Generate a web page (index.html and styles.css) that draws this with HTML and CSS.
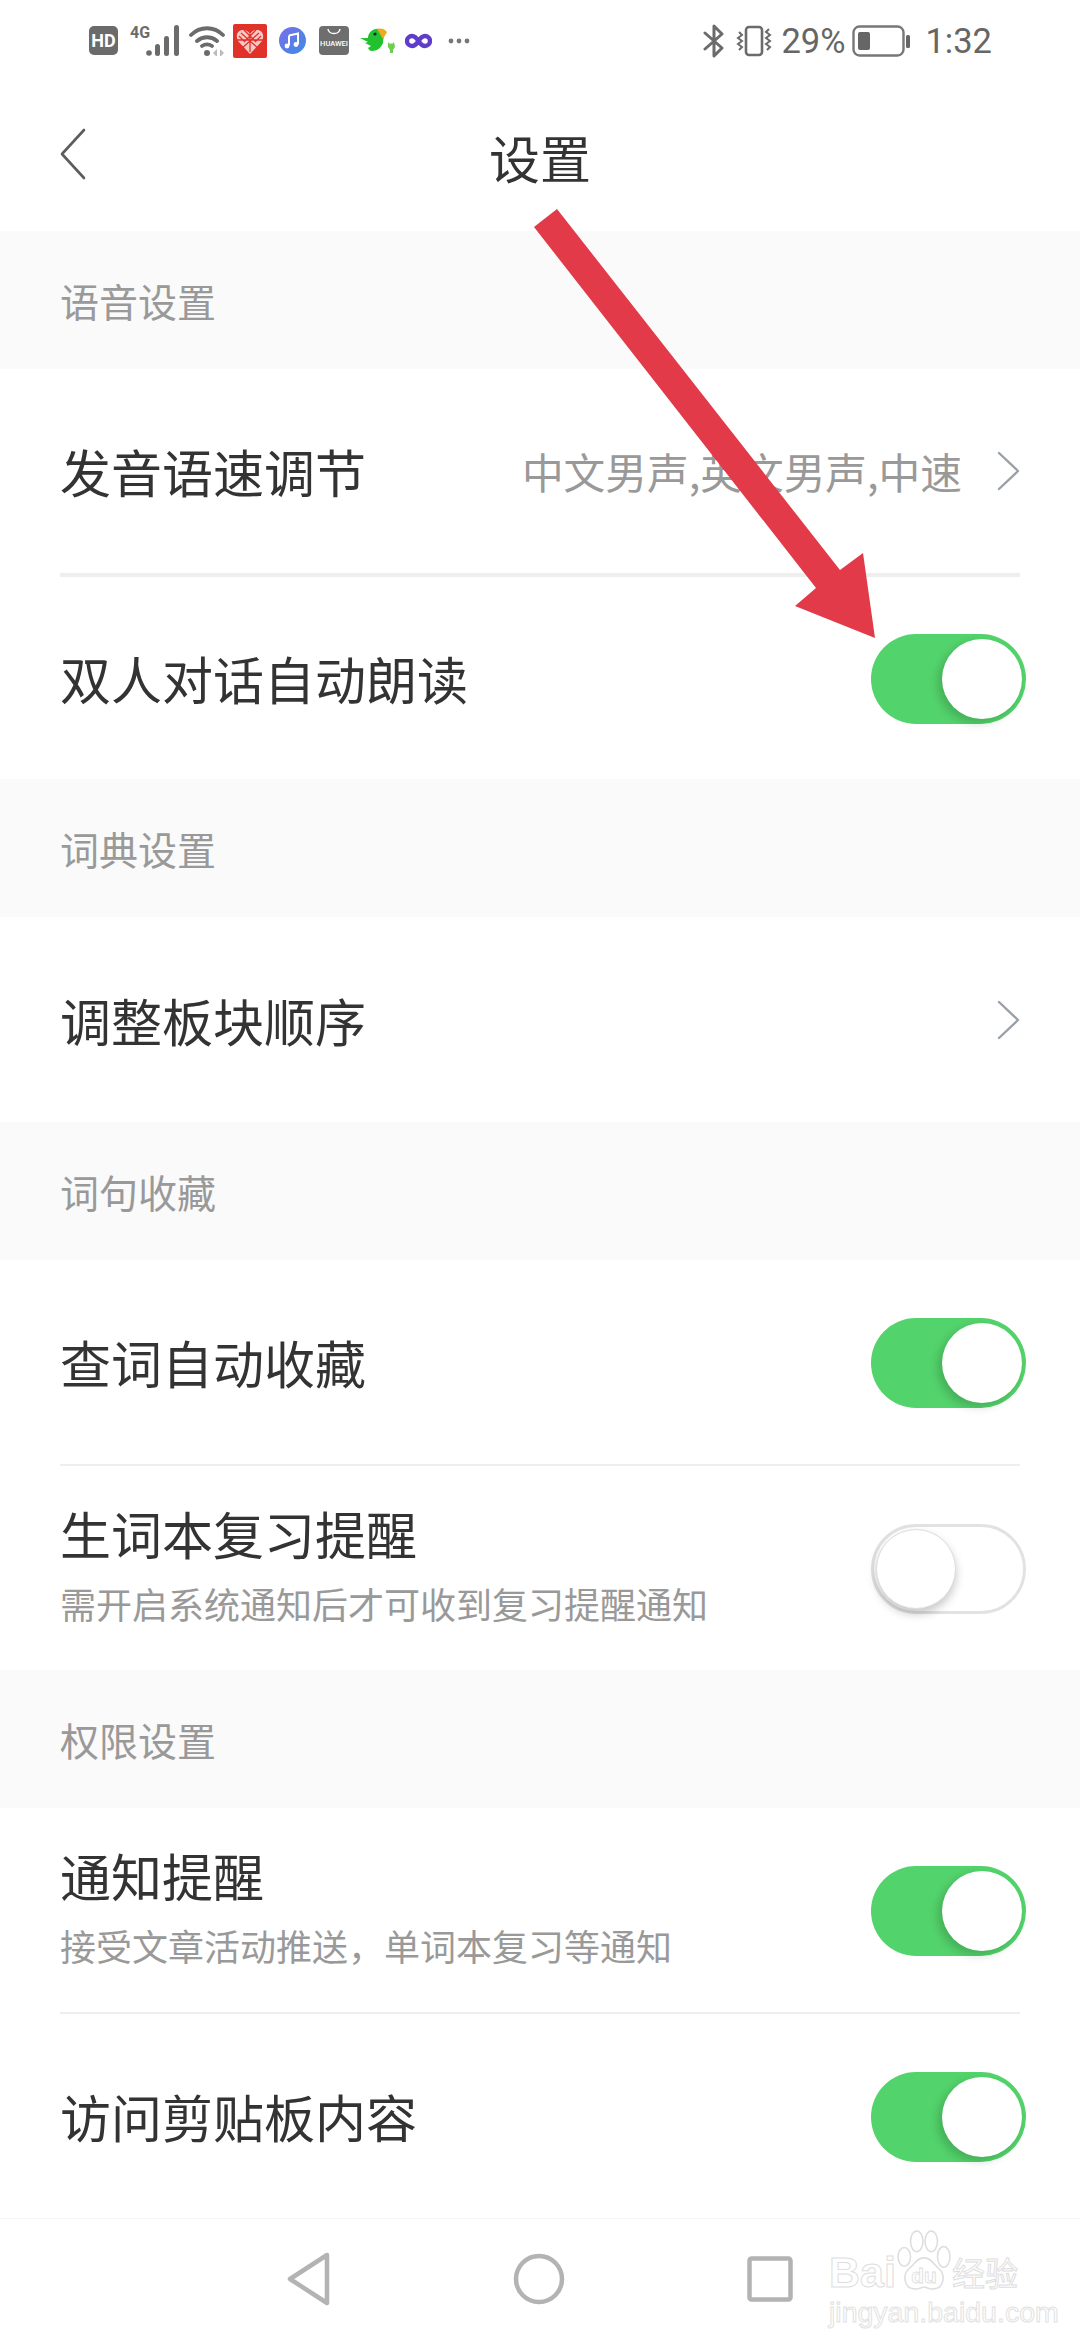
FILE: index.html
```html
<!DOCTYPE html>
<html lang="zh-CN">
<head>
<meta charset="utf-8">
<title>设置</title>
<link rel="stylesheet" href="styles.css">
</head>
<body>
<div class="phone">

	<div class="statusbar">
		<div class="status-left">
			<span class="hd-badge">HD</span>
			<svg class="ic-signal" width="50" height="31" viewBox="0 0 50 31"><text x="0" y="13" class="fourg-text">4G</text><circle cx="19" cy="28" r="2.800" fill="#6b6b6b"/><rect x="25" y="19" width="5" height="12" rx="2.500" fill="#6b6b6b"/><rect x="34" y="11" width="5" height="20" rx="2.500" fill="#6b6b6b"/><rect x="44" y="0" width="5" height="31" rx="2.500" fill="#6b6b6b"/></svg>
			<svg class="ic-wifi" width="38" height="31" viewBox="0 0 38 31"><path d="M2 10C11 1 25 1 34 10M8 16c6-5 14-5 20 0M13 21c3-2 7-2 10 0" fill="none" stroke="#6b6b6b" stroke-width="3.800" stroke-linecap="round"/><circle cx="18" cy="28" r="3" fill="#6b6b6b"/><path d="M28 24l-4 4 4 4zM31 24l4 4-4 4z" fill="#bbb"/></svg>
			<svg class="ic-red" width="34" height="34" viewBox="0 0 34 34"><rect width="34" height="34" rx="2" fill="#e1322a"/><path d="M17 30L5 17c-3-6 0-11 5-11 3 0 5 1 7 4 2-3 4-4 7-4 5 0 8 5 5 11z" fill="#f6c9c6"/><path d="M8 9l18 16M26 9L8 25M17 10v18M4 16h26M11 6l12 12M23 6L11 18M6 12l6 6M28 12l-6 6" stroke="#e1322a" stroke-width="1.300"/></svg>
			<svg class="ic-music" width="27" height="27" viewBox="0 0 27 27"><defs><linearGradient id="musicGrad" x1="0" y1="0" x2="1" y2="1"><stop offset="0" stop-color="#7a6ee8"/><stop offset="1" stop-color="#3d8be6"/></linearGradient></defs><circle cx="13.5" cy="13.5" r="13.5" fill="url(#musicGrad)"/><path d="M10 8.500l9-2v11" fill="none" stroke="#fff" stroke-width="2"/><path d="M10 8.500v10" fill="none" stroke="#fff" stroke-width="2"/><circle cx="8" cy="19" r="2.400" fill="#fff"/><circle cx="17" cy="17.500" r="2.400" fill="#fff"/></svg>
			<svg class="ic-huawei" width="30" height="29" viewBox="0 0 30 29"><rect width="30" height="29" rx="4" fill="#6e6e6e"/><path d="M9 3c1 6 11 6 12 0" fill="none" stroke="#fff" stroke-width="1.500"/><text x="15" y="20" text-anchor="middle" class="huawei-text">HUAWEI</text></svg>
			<svg class="ic-bird" width="36" height="26" viewBox="0 0 36 26"><path d="M0 10l8 0c0-5 5-10 11-9l5 3-1 11c-2 5-6 8-11 8-2 0-3-1-4-3l3-2-6-3 3-1z" fill="#22c12f"/><path d="M17 1c3-1 7-1 10 3l-4 7z" fill="#f0a81c"/><circle cx="15" cy="6" r="1.600" fill="#123"/><path d="M28 14l2 2 1-1 1 1 2-2 1 5-2 3v3h-3v-3l-2-3z" fill="#6fce4f"/></svg>
			<svg class="ic-inf" width="27" height="16" viewBox="0 0 27 16"><path d="M13.500 8C11 4 9 3 7 3a5 5 0 000 10c2 0 4-1 6.500-5s4.500-5 6.500-5a5 5 0 010 10c-2 0-4-1-6.500-5z" fill="none" stroke="#5f3cc9" stroke-width="4.400"/></svg>
			<svg class="ic-dots" width="22" height="6" viewBox="0 0 22 6"><circle cx="3" cy="3" r="2.400" fill="#777"/><circle cx="11" cy="3" r="2.400" fill="#777"/><circle cx="19" cy="3" r="2.400" fill="#777"/></svg>
		</div>
		<div class="status-right">
			<svg width="22" height="34" viewBox="0 0 22 34"><path d="M2 9l17 15-8 8V2l8 8L2 25" fill="none" stroke="#6b6b6b" stroke-width="3" stroke-linejoin="round" stroke-linecap="round"/></svg>
			<svg class="ic-vibrate" width="38" height="32" viewBox="0 0 38 32"><rect x="11" y="2" width="16" height="28" rx="3" fill="none" stroke="#6b6b6b" stroke-width="2.600"/><path d="M4 7l3 3-4 3 4 3-4 3 4 3-3 3M34 4l-3 3 4 3-4 3 4 3-4 3 4 3-3 3" fill="none" stroke="#6b6b6b" stroke-width="2"/></svg>
			<span class="status-text pct">29%</span>
			<svg class="ic-batt" width="59" height="32" viewBox="0 0 59 32"><rect x="1.500" y="1.500" width="50" height="29" rx="6" fill="none" stroke="#777" stroke-width="2.400"/><rect x="6" y="7" width="12" height="18" rx="2" fill="#666"/><rect x="54" y="10" width="4" height="13" rx="1.500" fill="#666"/></svg>
			<span class="status-text time">1:32</span>
		</div>
	</div>

	<header class="topbar">
		<svg class="back" width="28" height="52" viewBox="0 0 28 52"><path d="M25 2L3 26l22 24" fill="none" stroke="#5c5c5c" stroke-width="2.600" stroke-linecap="round" stroke-linejoin="round"/></svg>
		<h1 class="title">设置</h1>
	</header>

	<div class="group-head">语音设置</div>
	<div class="row thick">
		<span class="row-label">发音语速调节</span>
		<span class="row-value">中文男声,英文男声,中速</span>
		<svg class="chev" width="24" height="40" viewBox="0 0 24 40"><path d="M2 2l19 18L2 38" fill="none" stroke="#9aa0a8" stroke-width="2.400" stroke-linecap="round" stroke-linejoin="round"/></svg>
	</div>
	<div class="row last under-thick">
		<span class="row-label">双人对话自动朗读</span>
		<div class="toggle on"><i class="knob"></i></div>
	</div>

	<div class="group-head">词典设置</div>
	<div class="row last">
		<span class="row-label">调整板块顺序</span>
		<svg class="chev" width="24" height="40" viewBox="0 0 24 40"><path d="M2 2l19 18L2 38" fill="none" stroke="#9aa0a8" stroke-width="2.400" stroke-linecap="round" stroke-linejoin="round"/></svg>
	</div>

	<div class="group-head">词句收藏</div>
	<div class="row tall">
		<span class="row-label">查词自动收藏</span>
		<div class="toggle on"><i class="knob"></i></div>
	</div>
	<div class="row last short">
		<div class="row-text">
			<span class="row-label">生词本复习提醒</span>
			<span class="row-sub">需开启系统通知后才可收到复习提醒通知</span>
		</div>
		<div class="toggle"><i class="knob"></i></div>
	</div>

	<div class="group-head">权限设置</div>
	<div class="row tall">
		<div class="row-text">
			<span class="row-label">通知提醒</span>
			<span class="row-sub">接受文章活动推送，单词本复习等通知</span>
		</div>
		<div class="toggle on"><i class="knob"></i></div>
	</div>
	<div class="row last short">
		<span class="row-label">访问剪贴板内容</span>
		<div class="toggle on"><i class="knob"></i></div>
	</div>

	<nav class="navbar">
		<svg width="44" height="54" viewBox="0 0 44 54"><path d="M40 3L3 27l37 24z" fill="none" stroke="#b3b3b3" stroke-width="4.500" stroke-linejoin="round"/></svg>
		<svg width="52" height="52" viewBox="0 0 52 52"><circle cx="26" cy="26" r="23" fill="none" stroke="#b3b3b3" stroke-width="4.500"/></svg>
		<svg width="46" height="46" viewBox="0 0 46 46"><rect x="2.500" y="2.500" width="41" height="41" rx="2" fill="none" stroke="#b3b3b3" stroke-width="4.500"/></svg>
	</nav>

	<div class="watermark">
		<div class="wm-top">
			<span class="wm-bai">Bai</span>
			<svg width="56" height="68" viewBox="0 0 54 62"><g fill="none" stroke="#dedede" stroke-width="1.500"><ellipse cx="8" cy="27" rx="6" ry="9"/><ellipse cx="20" cy="12" rx="6" ry="10"/><ellipse cx="34" cy="12" rx="6" ry="10"/><ellipse cx="46" cy="27" rx="6" ry="10"/><path d="M27 28c-7 0-9 6-14 10-7 6-6 20 6 20 4 0 6-2 8-2s4 2 8 2c12 0 13-14 6-20-5-4-7-10-14-10z"/></g><text x="27" y="52" text-anchor="middle" class="wm-du">du</text></svg>
			<span class="wm-cn">经验</span>
		</div>
		<div class="wm-url">jingyan.baidu.com</div>
	</div>

	<svg class="arrow" width="1080" height="700" viewBox="0 0 1080 700"><path d="M534 227L557 209 840 570 863 553 875 638 795 606 816 588z" fill="#e33a49"/></svg>
</div>
</body>
</html>
```

FILE: styles.css
```css
* { box-sizing: border-box; }
html, body { margin: 0; padding: 0; background: #fff; }
body { font-family: "Noto Sans CJK SC", "Noto Sans", sans-serif; }

.phone { position: relative; width: 1080px; height: 2340px; overflow: hidden; background: #fff; }

/* status bar */
.statusbar { display: flex; justify-content: space-between; align-items: center; height: 79px; padding: 2px 88px 0 89px; }
.status-left, .status-right { display: flex; align-items: center; }
.status-left svg, .status-right svg { display: block; flex: none; }
.hd-badge { display: flex; align-items: center; justify-content: center; flex: none; width: 29px; height: 29px; border-radius: 5px; background: #6b6b6b; color: #fff; font: 700 18px/29px Roboto, sans-serif; }
.ic-signal { margin-left: 12px; }
.ic-wifi { margin-left: 9px; }
.ic-red { margin-left: 6px; }
.ic-music { margin-left: 12px; }
.ic-huawei { margin-left: 13px; }
.ic-bird { margin-left: 11px; }
.ic-inf { margin-left: 9px; }
.ic-dots { margin-left: 16px; }
.ic-vibrate { margin-left: 10px; }
.ic-batt { margin-left: 7px; }
.status-text { font-family: Roboto, sans-serif; font-size: 34.500px; color: #666; line-height: 40px; }
.pct { margin-left: 8px; }
.time { margin-left: 14px; }
.fourg-text { font: 700 16px "Roboto", sans-serif; fill: #6b6b6b; }
.huawei-text { font: 500 7.500px "Roboto", sans-serif; fill: #fff; }

/* title bar */
.topbar { position: relative; display: flex; align-items: center; justify-content: center; height: 152px; padding-top: 4px; }
.title { margin: 0; font-size: 51px; font-weight: 400; color: #333; line-height: 60px; }
.back { position: absolute; left: 59px; top: 49px; }

/* groups */
.group-head { display: flex; align-items: center; height: 138px; padding: 0 60px 1px; background: #fafafa; color: #999; font-size: 39px; }

.row { display: flex; align-items: center; height: 205px; margin: 0 60px; border-bottom: 2px solid #eee; }
.row.thick { height: 208px; border-bottom-width: 4px; }
.row.under-thick { height: 202px; }
.row.tall { height: 206px; }
.row.short { height: 204px; }
.row.last { border-bottom: 0; }
.row-label { font-size: 51px; color: #333; line-height: 62px; white-space: nowrap; }
.row-value { margin-left: auto; font-size: 41.700px; color: #999; white-space: nowrap; }
.row-text { display: flex; flex-direction: column; padding-bottom: 10px; }
.row-sub { margin-top: 17px; font-size: 36px; color: #999; line-height: 44px; white-space: nowrap; }
.chev { flex: none; margin: 0 -1px 0 35px; }
.row > .row-label + .chev { margin-left: auto; }

/* switches */
.toggle { display: flex; align-items: center; flex: none; width: 155px; height: 90px; margin: 2px -6px 0 auto; padding: 0 4px; border-radius: 45px; background: #fff; border: 3px solid #e2e2e2; }
.toggle .knob { display: block; width: 80px; height: 80px; margin-left: -2px; border-radius: 50%; background: #fff; border: 1px solid #ddd; box-shadow: 0 5px 10px rgba(0, 0, 0, .22); }
.toggle.on { justify-content: flex-end; background: #53d36b; border: 0; }
.toggle.on .knob { margin: 0; border: 0; box-shadow: -4px 4px 10px rgba(0, 0, 0, .18); }

/* nav bar */
.navbar { display: flex; justify-content: center; align-items: center; height: 122px; border-top: 1px solid #f5f5f5; padding-bottom: 2px; }
.navbar svg { display: block; flex: none; margin: 0 91px; }

/* overlays */
.watermark { position: absolute; left: 829px; top: 2227px; width: 200px; }
.wm-top { display: flex; align-items: flex-end; height: 68px; }
.wm-bai { font: 700 43px "Liberation Sans", sans-serif; color: #fff; -webkit-text-stroke: 1px #dedede; line-height: 46px; }
.wm-cn { font-size: 33px; color: #fff; -webkit-text-stroke: 1px #dedede; line-height: 46px; white-space: nowrap; }
.wm-du { font: 700 20px "Liberation Sans", sans-serif; fill: #fff; stroke: #dedede; stroke-width: .8; }
.wm-url { font: 400 28.500px "Liberation Sans", sans-serif; color: #fff; -webkit-text-stroke: 1px #e2e2e2; line-height: 34px; white-space: nowrap; }
.arrow { position: absolute; left: 0; top: 0; pointer-events: none; }
```
